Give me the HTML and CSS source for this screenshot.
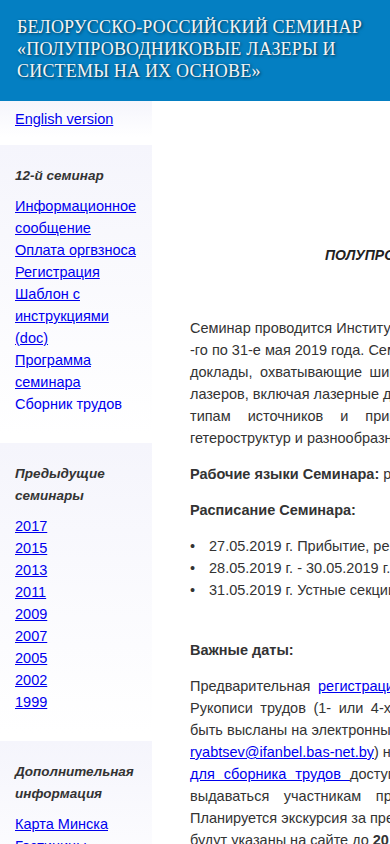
FILE: index.html
```html
<!DOCTYPE html>
<html lang="ru">
<head>
    <meta charset="UTF-8">
    <meta name="viewport" content="width=device-width, initial-scale=1.0">
    <title>Полупроводниковые лазеры и системы на их основе</title>
    <link rel="stylesheet" href="styles.css">
</head>
<body>
    <header class="site-header">
        <h1>Белорусско-Российский семинар «Полупроводниковые лазеры и системы на их основе»</h1>
    </header>

    <div class="layout">
        <aside class="sidebar">
            <div class="side-block lang">
                <a href="#">English version</a>
            </div>

            <div class="side-block">
                <h3>12-й семинар</h3>
                <ul class="side-links">
                    <li><a href="#">Информационное сообщение</a></li>
                    <li><a href="#">Оплата оргвзноса</a></li>
                    <li><a href="#">Регистрация</a></li>
                    <li><a href="#">Шаблон с инструкциями (doc)</a></li>
                    <li><a href="#">Программа семинара</a></li>
                    <li><a href="#" class="current">Сборник трудов</a></li>
                </ul>
            </div>

            <div class="side-block">
                <h3>Предыдущие семинары</h3>
                <ul class="side-links">
                    <li><a href="#">2017</a></li>
                    <li><a href="#">2015</a></li>
                    <li><a href="#">2013</a></li>
                    <li><a href="#">2011</a></li>
                    <li><a href="#">2009</a></li>
                    <li><a href="#">2007</a></li>
                    <li><a href="#">2005</a></li>
                    <li><a href="#">2002</a></li>
                    <li><a href="#">1999</a></li>
                </ul>
            </div>

            <div class="side-block">
                <h3>Дополнительная информация</h3>
                <ul class="side-links">
                    <li><a href="#">Карта Минска</a></li>
                    <li><a href="#">Гостиницы</a></li>
                    <li><a href="#">Контакты</a></li>
                </ul>
            </div>
        </aside>

        <main class="content">
            <h2 class="content-title">ПОЛУПРОВОДНИКОВЫЕ ЛАЗЕРЫ И СИСТЕМЫ НА ИХ ОСНОВЕ»</h2>
            <p class="content-dates">Минск, 27 – 31 мая 2019 г.</p>

            <p class="lines">
                Семинар проводится Институтом физики им. Б.И. Степанова НАН Беларуси с 27<br>
                -го по 31-е мая 2019 года. Семинар включает приглашенные, устные и стендовые<br>
                <span class="spread-sm">доклады, охватывающие широкий круг вопросов физики и техники полупроводниковых</span><br>
                лазеров, включая лазерные диоды, волоконные и твердотельные лазеры с диодной накачкой, по всем<br>
                <span class="spread-xl">типам источников и применению, для полупроводниковых инжекционных</span><br>
                гетероструктур и разнообразных лазерных систем на их основе.
            </p>

            <p><b>Рабочие языки Семинара:</b> русский, английский.</p>

            <p><b>Расписание Семинара:</b></p>

            <ul class="schedule">
                <li>27.05.2019 г. Прибытие, регистрация участников.</li>
                <li>28.05.2019 г. - 30.05.2019 г. Пленарные и устные секции, стендовая сессия.</li>
                <li>31.05.2019 г. Устные секции, закрытие семинара, отъезд участников.</li>
            </ul>

            <p class="spaced"><b>Важные даты:</b></p>

            <p class="lines">
                <span class="spread-sm">Предварительная <a href="#">регистрация участников</a> – до 1 апреля 2019 г.</span><br>
                <span class="spread-sm">Рукописи трудов (1- или 4-х страничные тезисы докладов) должны</span><br>
                быть высланы на электронные адреса оргкомитета (<a href="mailto:semlaser@ifanbel.bas-net.by">semlaser@ifanbel.bas-net.by</a>,<br>
                <a href="mailto:ryabtsev@ifanbel.bas-net.by">ryabtsev@ifanbel.bas-net.by</a>) не позднее 15 апреля 2019 г. Шаблон с инструкциями<br>
                <span class="spread-md"><a href="#">для сборника трудов </a>доступен на сайте. Сборник трудов будет</span><br>
                <span class="spread-lg">выдаваться участникам при регистрации.</span><br>
                Планируется экскурсия за пределы Минска. Подробности<br>
                будут указаны на сайте до <b>20 мая 2019 г.</b>
            </p>
        </main>
    </div>
</body>
</html>
```

FILE: styles.css
```css
/* General styles */
body {
    margin: 0;
    padding: 0;
    font-family: "Liberation Sans", Arial, sans-serif;
    color: #333;
    background-color: #ffffff;
    overflow-x: hidden;
}

a {
    color: #0000ee;
}

/* Header */
.site-header {
    background-color: #047fc2;
    padding: 16px 17px 19px;
}

.site-header h1 {
    margin: 0;
    font-family: "Liberation Serif", "Times New Roman", serif;
    font-size: 18px;
    font-weight: normal;
    line-height: 22px;
    letter-spacing: 0.2px;
    text-transform: uppercase;
    color: #f4f4f4;
    text-shadow: 1px 1px 3px rgba(0, 0, 0, 0.6);
}

/* Two columns */
.layout {
    display: flex;
    align-items: flex-start;
}

/* Sidebar */
.sidebar {
    flex: none;
    width: 152px;
}

.side-block {
    padding: 20px 10px 20px 15px;
    margin-bottom: 8px;
    background: linear-gradient(#f5f5fc, #ffffff);
    font-size: 14.5px;
    line-height: 22px;
}

.side-block.lang {
    padding-top: 7px;
    padding-bottom: 7px;
}

.side-block h3 {
    margin: 0 0 8px;
    font-size: 13.5px;
    font-style: italic;
    font-weight: bold;
    line-height: 22px;
    color: #333;
}

.side-links {
    list-style: none;
    margin: 0;
    padding: 0;
}

.side-links a.current {
    text-decoration: none;
}

/* Main content */
.content {
    flex: none;
    width: 720px;
    padding: 143px 0 40px 38px;
    font-size: 14.5px;
    line-height: 22px;
}

.content p {
    margin: 14px 0;
}

.content-title {
    margin: 0;
    font-size: 14px;
    font-style: italic;
    font-weight: bold;
    line-height: 22px;
    text-align: center;
    color: #222;
}

.content .content-dates {
    margin: 0 0 29px;
    text-align: center;
}

.content .spaced {
    margin-top: 38px;
}

.lines {
    white-space: nowrap;
}

.spread-sm {
    word-spacing: 3.5px;
}

.spread-md {
    word-spacing: 5px;
}

.spread-lg {
    word-spacing: 10.5px;
}

.spread-xl {
    word-spacing: 13px;
}

.schedule {
    list-style: none;
    margin: 14px 0;
    padding: 0;
}

.schedule li::before {
    content: "•";
    display: inline-block;
    width: 19px;
}
```
